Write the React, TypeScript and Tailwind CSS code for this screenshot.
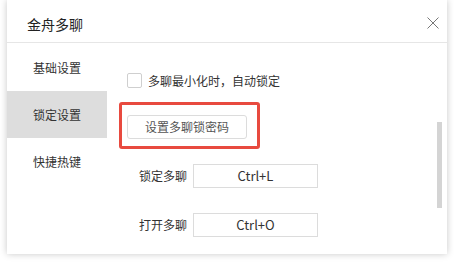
import React from "react";

const font = { fontFamily: '"Noto Sans CJK SC", "Noto Sans", sans-serif' };

export default function App() {
  return (
    <div className="w-[454px] h-[262px] bg-white px-[7px] pb-[8px]" style={font}>
      <div className="relative w-[440px] h-[254px] bg-white shadow-[0_0_7px_rgba(0,0,0,0.22)] flex flex-col">
        <div className="h-[43px] shrink-0 border-b border-[#e6e6e6] flex items-center justify-between pl-[20px] pr-[7px] pt-[6px]">
          <span className="text-[14px] leading-none text-[#222]">金舟多聊</span>
          <svg width="14" height="14" viewBox="0 0 14 14" className="mb-[2px]">
            <path d="M1.5 1.5L12.5 12.5M12.5 1.5L1.5 12.5" stroke="#777" strokeWidth="1" fill="none" />
          </svg>
        </div>
        <div className="flex flex-1 pt-[1px]">
          <div className="w-[100px] flex flex-col">
            <div className="h-[47px] flex items-center pl-[26px] text-[12px] text-[#333]">基础设置</div>
            <div className="h-[47px] flex items-center pl-[26px] text-[12px] text-[#333] bg-[#dddddd]">锁定设置</div>
            <div className="h-[47px] flex items-center pl-[26px] text-[12px] text-[#333]">快捷热键</div>
          </div>
          <div className="flex-1 flex flex-col pl-[20px]">
            <div className="flex items-center gap-[6px] mt-[29px] h-[15px]">
              <div className="w-[15px] h-[15px] border border-[#cfcfcf] rounded-[2px] bg-white" />
              <span className="text-[12px] text-[#333] leading-none">多聊最小化时，自动锁定</span>
            </div>
            <div className="relative mt-[27px] w-[120px] h-[24px]">
              <div className="absolute left-[-8px] top-[-13px] w-[141px] h-[47px] border-[3px] border-[#e84a3f] rounded-[3px]" />
              <button className="w-[120px] h-[24px] border border-[#dcdcdc] rounded-[3px] bg-white text-[12px] text-[#555] flex items-center justify-center">
                设置多聊锁密码
              </button>
            </div>
            <div className="flex items-center mt-[25px] h-[24px]">
              <span className="w-[66px] text-right pr-[6px] text-[12px] text-[#333]">锁定多聊</span>
              <div className="w-[125px] h-[24px] border border-[#dcdcdc] flex items-center justify-center text-[13px] text-[#333]">Ctrl+L</div>
            </div>
            <div className="flex items-center mt-[25px] h-[24px]">
              <span className="w-[66px] text-right pr-[6px] text-[12px] text-[#333]">打开多聊</span>
              <div className="w-[125px] h-[24px] border border-[#dcdcdc] flex items-center justify-center text-[13px] text-[#333]">Ctrl+O</div>
            </div>
          </div>
        </div>
        <div className="absolute left-[430px] top-[122px] w-[5px] h-[86px] bg-[#d4d4d4]" />
      </div>
    </div>
  );
}
